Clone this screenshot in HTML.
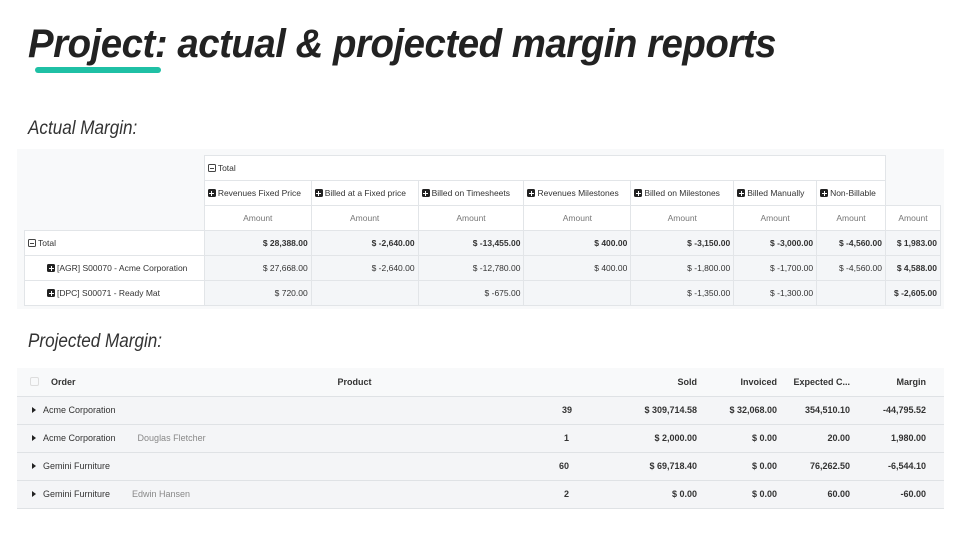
<!DOCTYPE html>
<html><head><meta charset="utf-8"><style>
*{margin:0;padding:0;box-sizing:border-box}
body{width:960px;height:540px;background:#fff;position:relative;overflow:hidden;font-family:"Liberation Sans","DejaVu Sans",sans-serif;color:#333}
.t{position:absolute;white-space:nowrap}
#title{left:28px;top:22px;font-size:40px;font-style:italic;font-weight:bold;color:#222;transform-origin:0 0;transform:scaleX(0.96);letter-spacing:-0.5px}
#ul{position:absolute;left:35px;top:67px;width:126px;height:6px;border-radius:3px;background:#1fc0a5}
.h2{font-size:19px;font-style:italic;color:#333;transform-origin:0 0;transform:scaleX(0.9)}
table{border-collapse:collapse;position:absolute;font-size:8.5px;color:#333}
td{border:1px solid #e2e5e8;padding:0 3px;height:25px;white-space:nowrap}
.p td{text-align:right}
.g{background:#f4f6f8}
.w{background:#fff}
.b{font-weight:bold}
.c{text-align:center!important;color:#777}
.pl{display:inline-block;width:8px;height:8px;background:#222;border-radius:1.5px;vertical-align:-1px;margin-right:2px;position:relative}
.pl:before{content:"";position:absolute;left:1.5px;right:1.5px;top:3.5px;height:1px;background:#fff}
.pl:after{content:"";position:absolute;top:1.5px;bottom:1.5px;left:3.5px;width:1px;background:#fff}
.mn{display:inline-block;width:8px;height:8px;border:1px solid #444;border-radius:1.5px;vertical-align:-1px;margin-right:2px;position:relative}
.mn:after{content:"";position:absolute;left:1px;right:1px;top:2.5px;height:1px;background:#444}
.q td{border:none;border-bottom:1px solid #dfe2e5;height:28px;font-size:9px;background:#f4f5f7}
.tri{display:inline-block;width:0;height:0;border-left:4px solid #222;border-top:3px solid transparent;border-bottom:3px solid transparent;margin:0 7px 0 2px}
</style></head><body>
<div id="ul"></div>
<div class="t" id="title">Project: actual &amp; projected margin reports</div>
<div class="t h2" style="left:28px;top:118px">Actual Margin:</div>
<div style="position:absolute;left:17px;top:149px;width:927px;height:160px;background:#f8f9fa"></div>
<table class="p" style="left:24px;top:155px;width:917px">
<colgroup><col style="width:180px"><col style="width:107px"><col style="width:107px"><col style="width:106px"><col style="width:107px"><col style="width:103px"><col style="width:83px"><col style="width:69px"><col style="width:55px"></colgroup>
<tr><td style="border:none;background:#f8f9fa"></td><td colspan="7" class="w" style="text-align:left"><span class="mn"></span>Total</td><td style="border:none;background:#f8f9fa"></td></tr>
<tr><td style="border:none;background:#f8f9fa"></td><td class="w" style="text-align:left"><span class="pl"></span>Revenues Fixed Price</td><td class="w" style="text-align:left"><span class="pl"></span>Billed at a Fixed price</td><td class="w" style="text-align:left"><span class="pl"></span>Billed on Timesheets</td><td class="w" style="text-align:left"><span class="pl"></span>Revenues Milestones</td><td class="w" style="text-align:left"><span class="pl"></span>Billed on Milestones</td><td class="w" style="text-align:left"><span class="pl"></span>Billed Manually</td><td class="w" style="text-align:left"><span class="pl"></span>Non-Billable</td><td style="border:none;background:#f8f9fa"></td></tr>
<tr><td style="border:none;background:#f8f9fa"></td><td class="w c">Amount</td><td class="w c">Amount</td><td class="w c">Amount</td><td class="w c">Amount</td><td class="w c">Amount</td><td class="w c">Amount</td><td class="w c">Amount</td><td class="w c">Amount</td></tr>
<tr class="b"><td class="w" style="text-align:left;font-weight:normal"><span class="mn"></span>Total</td><td class="g">$ 28,388.00</td><td class="g">$ -2,640.00</td><td class="g">$ -13,455.00</td><td class="g">$ 400.00</td><td class="g">$ -3,150.00</td><td class="g">$ -3,000.00</td><td class="g">$ -4,560.00</td><td class="g">$ 1,983.00</td></tr>
<tr><td class="w" style="text-align:left;padding-left:22px"><span class="pl"></span>[AGR] S00070 - Acme Corporation</td><td class="g">$ 27,668.00</td><td class="g">$ -2,640.00</td><td class="g">$ -12,780.00</td><td class="g">$ 400.00</td><td class="g">$ -1,800.00</td><td class="g">$ -1,700.00</td><td class="g">$ -4,560.00</td><td class="g b">$ 4,588.00</td></tr>
<tr><td class="w" style="text-align:left;padding-left:22px"><span class="pl"></span>[DPC] S00071 - Ready Mat</td><td class="g">$ 720.00</td><td class="g"></td><td class="g">$ -675.00</td><td class="g"></td><td class="g">$ -1,350.00</td><td class="g">$ -1,300.00</td><td class="g"></td><td class="g b">$ -2,605.00</td></tr>
</table>
<div class="t h2" style="left:28px;top:331px">Projected Margin:</div>
<table class="q" style="left:17px;top:368px;width:927px">
<colgroup><col style="width:300px"><col style="width:75px"><col style="width:180px"><col style="width:128px"><col style="width:80px"><col style="width:73px"><col style="width:91px"></colgroup>
<tr class="b" style="background:#f8f9fa"><td style="background:#f8f9fa"><span style="display:inline-block;width:9px;height:9px;border:1px solid #ddd;border-radius:2px;margin:0 12px 0 10px;vertical-align:-1px"></span>Order</td><td style="background:#f8f9fa;text-align:center">Product</td><td style="background:#f8f9fa"></td><td style="background:#f8f9fa;text-align:right">Sold</td><td style="background:#f8f9fa;text-align:right">Invoiced</td><td style="background:#f8f9fa;text-align:right">Expected C...</td><td style="background:#f8f9fa;text-align:right;padding-right:18px">Margin</td></tr>
<tr><td><span class="tri" style="margin-left:12px"></span>Acme Corporation</td><td></td><td style="text-align:right;padding-right:0;font-weight:bold">39</td><td style="text-align:right" class="b">$ 309,714.58</td><td style="text-align:right" class="b">$ 32,068.00</td><td style="text-align:right" class="b">354,510.10</td><td style="text-align:right;padding-right:18px" class="b">-44,795.52</td></tr>
<tr><td><span class="tri" style="margin-left:12px"></span>Acme Corporation<span style="color:#888;margin-left:22px">Douglas Fletcher</span></td><td></td><td style="text-align:right;font-weight:bold">1</td><td style="text-align:right" class="b">$ 2,000.00</td><td style="text-align:right" class="b">$ 0.00</td><td style="text-align:right" class="b">20.00</td><td style="text-align:right;padding-right:18px" class="b">1,980.00</td></tr>
<tr><td><span class="tri" style="margin-left:12px"></span>Gemini Furniture</td><td></td><td style="text-align:right;font-weight:bold">60</td><td style="text-align:right" class="b">$ 69,718.40</td><td style="text-align:right" class="b">$ 0.00</td><td style="text-align:right" class="b">76,262.50</td><td style="text-align:right;padding-right:18px" class="b">-6,544.10</td></tr>
<tr><td><span class="tri" style="margin-left:12px"></span>Gemini Furniture<span style="color:#888;margin-left:22px">Edwin Hansen</span></td><td></td><td style="text-align:right;font-weight:bold">2</td><td style="text-align:right" class="b">$ 0.00</td><td style="text-align:right" class="b">$ 0.00</td><td style="text-align:right" class="b">60.00</td><td style="text-align:right;padding-right:18px" class="b">-60.00</td></tr>
</table>
</body></html>
